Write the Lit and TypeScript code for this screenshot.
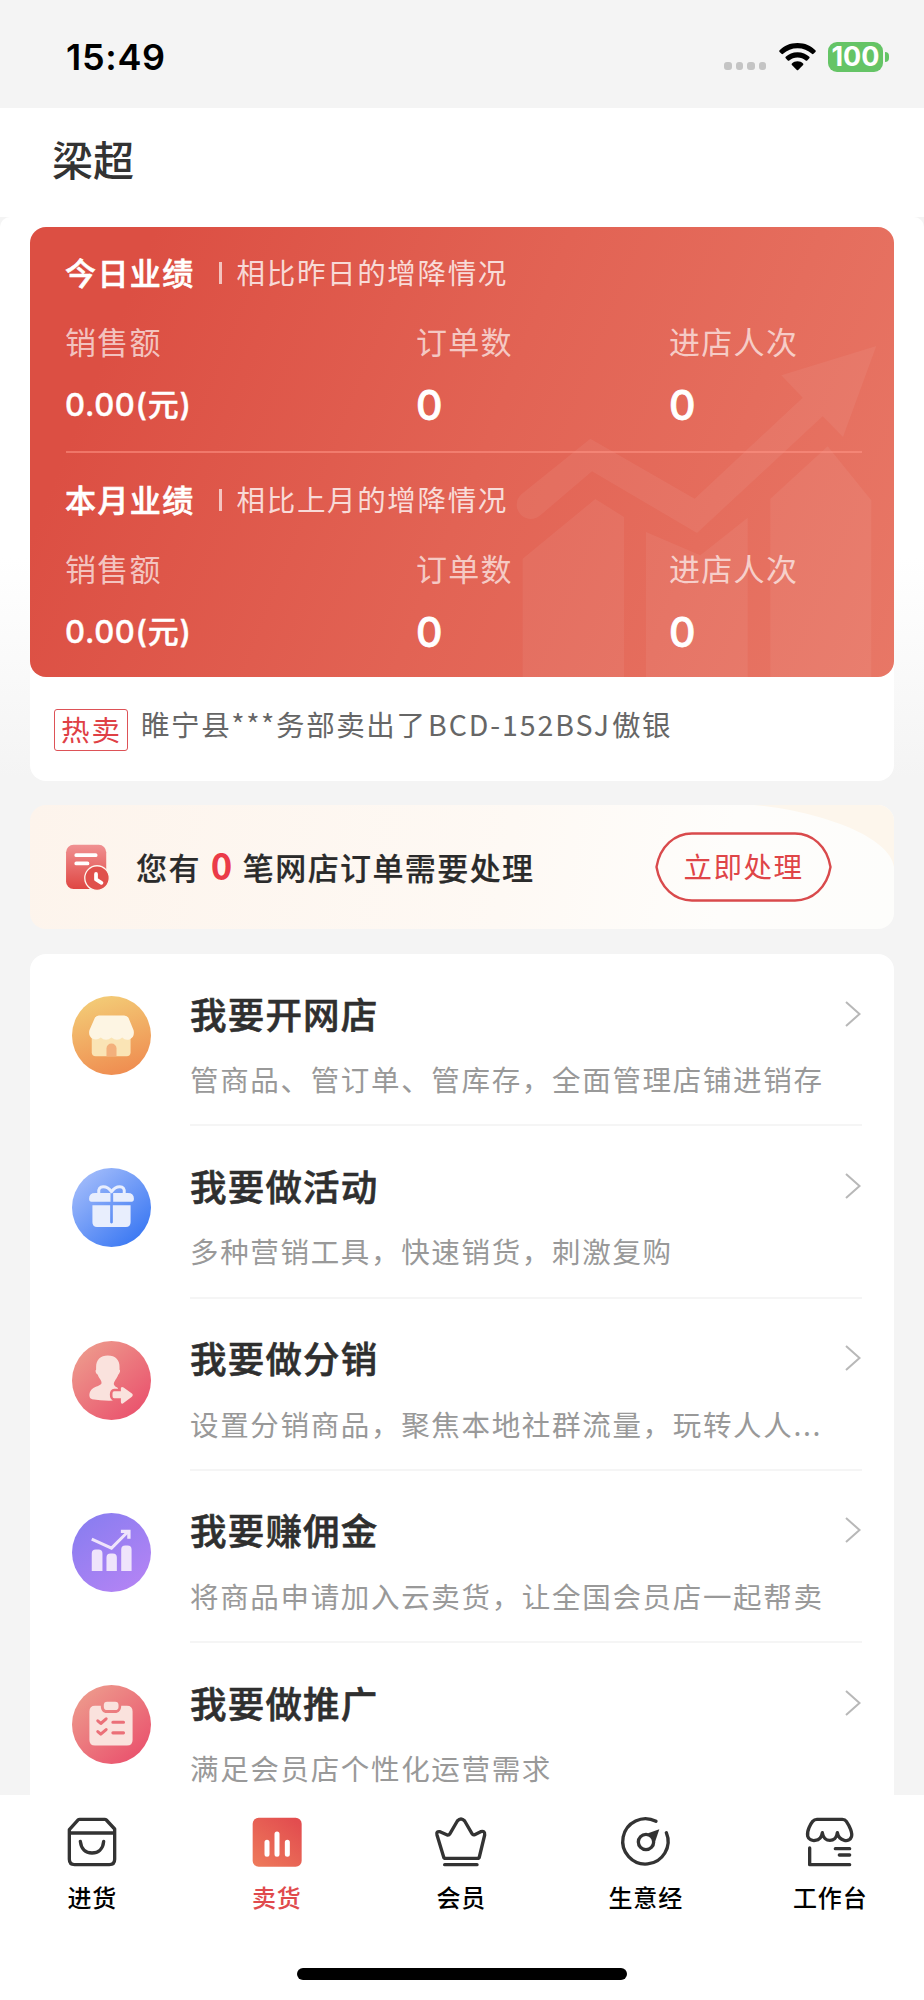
import { LitElement, html, css, svg } from "lit";
import { customElement, property } from "lit/decorators.js";

interface Stat { title: string; hint: string; }
interface MenuItem { icon: string; title: string; desc: string; }
interface Tab { icon: string; label: string; active?: boolean; }

const gradient = (id: string, from: string, to: string, y1 = "15%") => svg`
  <defs><linearGradient id=${id} x1="15%" y1=${y1} x2="80%" y2="90%">
    <stop offset="0" stop-color=${from}></stop><stop offset="1" stop-color=${to}></stop>
  </linearGradient></defs>
  <circle r="118" fill="url(#${id})"></circle>`;

const MENU_ICONS: Record<string, unknown> = {
  shop: svg`
    <defs><linearGradient id="shop" x1="35%" y1="0" x2="65%" y2="100%">
      <stop offset="0" stop-color="#f3cb76"></stop><stop offset="1" stop-color="#ef8c50"></stop>
    </linearGradient></defs>
    <circle r="118" fill="url(#shop)"></circle>
    <path d="M-59 0H57V50Q57 62 45 62H-47Q-59 62 -59 50Z" fill="#fae4b5"></path>
    <path d="M-15 62V39A15 15 0 0 1 15 39V62Z" fill="#f3b07c"></path>
    <path d="M-38 -60H38Q47 -60 51 -52L66 -16Q70 4 55 11Q42 16 32 6Q17 20 0 6Q-17 20 -32 6Q-44 16 -56 10Q-70 2 -66 -16L-50 -52Q-46 -60 -38 -60Z" fill="#fdf5e3"></path>`,
  gift: svg`${gradient("gift", "#9bb7fa", "#3f7bf3")}
    <path d="M0 -47C-12 -66 -42 -70 -38 -43M0 -47C12 -66 42 -70 38 -43" fill="none" stroke="#e8eefd" stroke-width="9" stroke-linecap="round"></path>
    <path d="M-38 -43H-3V-17H-60Q-67 -17 -67 -26Q-67 -43 -49 -43ZM38 -43H5V-17H60Q67 -17 67 -26Q67 -43 49 -43Z" fill="#e8eefd"></path>
    <path d="M-57 -7H-4V45Q0 50 4 45V-7H57V44Q57 58 43 58H-43Q-57 58 -57 44Z" fill="#e8eefd"></path>`,
  share: svg`${gradient("share", "#ed958a", "#ea566f")}
    <path d="M-11 -75C12 -75 25 -61 24 -40V-32C28 -31 24 -20 20 -17C16 -5 7 2 7 11C10 21 20 19 20 25H8Q-5 27 -5 42Q-5 55 4 60Q-30 61 -58 56Q-66 54 -66 46C-66 17 -38 21 -30 9C-28 0 -37 -5 -41 -17C-48 -22 -49 -30 -46 -33V-40C-46 -62 -33 -75 -11 -75Z" fill="#fae2dd"></path>
    <path d="M8 32H28V22Q31 17 36 21L60 38Q67 43 60 49L34 69Q28 71 28 64V53H8Q3 53 3 47V38Q3 32 8 32Z" fill="#fae2dd"></path>`,
  chart: svg`${gradient("chart", "#887df0", "#b183f4", "0%")}
    <path d="M-59 -40L0 -13L49 -62" fill="none" stroke="#efe4fb" stroke-width="9"></path>
    <path d="M28 -68H57V-41H47V-58H28Z" fill="#efe4fb"></path>
    <path d="M-59 55V3Q-59 -9 -47 -9H-39Q-27 -9 -27 3V55ZM-15 55V15Q-15 3 -3 3H4Q16 3 16 15V55ZM29 55V-9Q29 -21 41 -21H48Q60 -21 60 -9V55Z" fill="#efe4fb"></path>`,
  list: svg`${gradient("list", "#ed958a", "#ea566f")}
    <path d="M-32 -56H-49Q-66 -56 -66 -39V46Q-66 63 -49 63H46Q63 63 63 46V-39Q63 -56 46 -56H29C29 -43 22 -34 10 -34H-14C-26 -34 -32 -43 -32 -56Z" fill="#fae2dd"></path>
    <rect x="-23" y="-68" width="44" height="25" rx="10" fill="#fae2dd"></rect>
    <path d="M-41 -11L-32 -3L-16 -17M-41 21L-32 29L-16 15M4 -7H36M4 25H36" fill="none" stroke="#eb7078" stroke-width="9" stroke-linecap="round" stroke-linejoin="round"></path>`,
};

const TAB_ICONS: Record<string, unknown> = {
  stock: svg`<g fill="none" stroke="#333" stroke-width="10" stroke-linecap="round" stroke-linejoin="round">
    <path d="M7 38L34 8Q35 7 38 7H113Q116 7 118 9L143 36V127Q143 143 127 143H23Q7 143 7 127ZM7 48H143"></path>
    <path d="M40 73C43 97 57 108 75 108S108 97 110 73"></path></g>`,
  sell: svg`<defs><linearGradient id="sell" x1="0" y1="1" x2=".8" y2="0">
      <stop offset="0" stop-color="#ee7b5b"></stop><stop offset="1" stop-color="#e24d4f"></stop></linearGradient></defs>
    <rect x="2" y="2" width="147" height="147" rx="18" fill="url(#sell)"></rect>
    <path d="M45 76V112M75 51V112M106 76V112" stroke="#fff" stroke-width="15" stroke-linecap="round"></path>`,
  vip: svg`<g fill="none" stroke="#333" stroke-width="10" stroke-linecap="round" stroke-linejoin="round">
    <path d="M3 54Q0 42 12 44L34 54Q39 55 42 50L64 12Q75 0 86 12L108 50Q111 55 116 53L134 44Q147 40 146 54L130 120Q129 124 124 124H29Q24 124 23 120Z"></path>
    <path d="M26 143H123"></path></g>`,
  compass: svg`<g fill="none" stroke="#333" stroke-width="10" stroke-linecap="round">
    <path d="M105 13A68 68 0 1 0 136 47"></path><circle cx="75" cy="75" r="23"></circle></g>
    <path d="M115 37L81 49L103 72Z" fill="#333"></path>`,
  desk: svg`<g fill="none" stroke="#333" stroke-width="10" stroke-linecap="round" stroke-linejoin="round">
    <path d="M36 7H112Q120 7 124 13C133 26 144 49 139 60C134 77 102 74 97 47C94 78 56 78 52 47C48 76 13 77 8 57C5 42 17 20 23 13Q28 7 36 7Z"></path>
    <path d="M14 93V143H134M91 95H134M103 114H134"></path></g>`,
};

@customElement("menu-row")
class MenuRow extends LitElement {
  @property({ attribute: false }) item!: MenuItem;
  static styles = css`
    :host { display: flex; height: 172.33px; padding: 0 32px 0 41.5px; box-sizing: border-box; }
    .icon { width: 79px; height: 79px; margin-top: 42px; flex: none; }
    .body { flex: 1; min-width: 0; margin-left: 39.5px; border-bottom: 2px solid #f5f5f5; padding-top: 30px; box-sizing: border-box; }
    .head { display: flex; align-items: center; justify-content: space-between; height: 58px; }
    .title { font-size: 36.5px; letter-spacing: 1.2px; font-weight: 500; -webkit-text-stroke: .6px #2f2f2f; color: #2f2f2f; line-height: 58px; margin-top: 1px; }
    .chevron { width: 18px; height: 28px; margin-top: 1px; }
    .desc { margin-top: 16px; margin-right: 38px; font-size: 28.5px; letter-spacing: 1.67px; line-height: 42px; color: #999; white-space: nowrap; }
  `;
  render() {
    return html`
      <svg class="icon" viewBox="-118 -118 236 236">${MENU_ICONS[this.item.icon]}</svg>
      <div class="body">
        <div class="head">
          <div class="title">${this.item.title}</div>
          <svg class="chevron" viewBox="0 0 18 28" fill="none" stroke="#b8b8b8" stroke-width="2"><path d="M2 2L15.5 14L2 26"></path></svg>
        </div>
        <div class="desc">${this.item.desc}</div>
      </div>`;
  }
}

@customElement("app-root")
class AppRoot extends LitElement {
  private stats: Stat[] = [
    { title: "今日业绩", hint: "相比昨日的增降情况" },
    { title: "本月业绩", hint: "相比上月的增降情况" },
  ];
  private menu: MenuItem[] = [
    { icon: "shop", title: "我要开网店", desc: "管商品、管订单、管库存，全面管理店铺进销存" },
    { icon: "gift", title: "我要做活动", desc: "多种营销工具，快速销货，刺激复购" },
    { icon: "share", title: "我要做分销", desc: "设置分销商品，聚焦本地社群流量，玩转人人..." },
    { icon: "chart", title: "我要赚佣金", desc: "将商品申请加入云卖货，让全国会员店一起帮卖" },
    { icon: "list", title: "我要做推广", desc: "满足会员店个性化运营需求" },
  ];
  private tabs: Tab[] = [
    { icon: "stock", label: "进货" },
    { icon: "sell", label: "卖货", active: true },
    { icon: "vip", label: "会员" },
    { icon: "compass", label: "生意经" },
    { icon: "desk", label: "工作台" },
  ];

  static styles = css`
    :host { display: flex; flex-direction: column; width: 924px; height: 2000px; overflow: hidden; background: #f4f4f4; font-family: "Noto Sans CJK SC", sans-serif; }
    .status { height: 108px; flex: none; display: flex; align-items: flex-start; padding: 0 35px 0 66px; box-sizing: border-box; background: #f4f4f4; }
    .time { margin-top: 34px; font: 600 36px/46px Inter, sans-serif; letter-spacing: .7px; color: #000; flex: 1; }
    .dots { display: flex; gap: 4px; margin: 62px 13px 0 0; }
    .dot { width: 7.500px; height: 8px; border-radius: 3px; background: #c4c4c4; }
    .wifi { width: 37px; height: 28px; margin: 43px 12px 0 0; }
    .battery { width: 55px; height: 30px; margin-top: 42px; border-radius: 9px; background: #65c466; color: #fff; font: 700 27px/30px Inter, sans-serif; text-align: center; }
    .nub { width: 4px; height: 10px; margin: 52px 0 0 2px; border-radius: 0 4px 4px 0; background: #65c466; }
    .header { height: 109px; flex: none; background: #fff; padding: 20px 52px; box-sizing: border-box; font-size: 41px; line-height: 60px; font-weight: 500; color: #333; }
    .content { flex: 1; min-height: 0; overflow: hidden; border-radius: 10px 10px 0 0; padding: 10px 30px 0; background: linear-gradient(#fff 0, #fff 340px, #f4f4f4 560px); }
    .summary { background: #fff; border-radius: 16px; height: 554px; }
    .card { position: relative; height: 450px; border-radius: 16px; overflow: hidden; background: linear-gradient(112deg, #dc4f43 12%, #e26354 52%, #e87766 100%); color: #fff; }
    .mark { position: absolute; right: 0; top: 0; width: 432px; height: 450px; fill: #fff; fill-opacity: .06; }
    .stat { position: relative; padding: 23px 32px 0 35px; }
    .stat + .stat { padding-top: 24px; }
    .stat-head { display: flex; align-items: center; height: 44px; line-height: 44px; }
    .stat-title { font-size: 31px; letter-spacing: 1.4px; font-weight: 500; -webkit-text-stroke: .6px #fff; }
    .bar { width: 3px; height: 22px; margin: 2px 15px 0 24px; background: rgba(255,255,255,.65); }
    .hint { font-size: 28.5px; letter-spacing: 1.65px; color: rgba(255,255,255,.78); }
    .grid { display: grid; grid-template-columns: 351px 253px 1fr; }
    .label { margin-top: 27px; font-size: 31px; letter-spacing: 1.3px; line-height: 40px; color: rgba(255,255,255,.68); }
    .value { margin-top: 19px; font: 500 41px/50px Inter, "Noto Sans CJK SC", sans-serif; -webkit-text-stroke: .8px #fff; }
    .money { font-size: 31px; letter-spacing: .7px; -webkit-text-stroke: .4px #fff; }
    .rule { height: 2px; margin: 21px 0 0 1px; background: rgba(255,150,135,.55); }
    .hot { display: flex; align-items: flex-start; padding: 32px 24px 0; }
    .tag { border: 1.5px solid #dd5257; border-radius: 3px; height: 42px; width: 74px; box-sizing: border-box; padding-left: 6px; font-size: 28.5px; letter-spacing: 2px; line-height: 38px; color: #df4045; white-space: nowrap; }
    .news { margin: -6px 0 0 13px; font-size: 28.5px; letter-spacing: 1.6px; line-height: 42px; color: #666; white-space: nowrap; }
    .model { letter-spacing: 1.9px; margin: 0 1px 0 1.5px; }
    .notice { position: relative; display: flex; align-items: center; height: 124px; margin-top: 24px; border-radius: 16px; overflow: hidden; background: linear-gradient(100deg, #fdf4ec, #fef9f4 55%, #fefdfb 80%, #fdfdfb); padding: 0 62px 0 35px; box-sizing: border-box; }
    .corner { position: absolute; right: 0; top: 0; width: 140px; height: 62px; fill: #fdf6ec; }
    .order { width: 45px; height: 47px; margin-right: 26px; }
    .notice-text { flex: 1; font-size: 31px; letter-spacing: 1.4px; font-weight: 500; -webkit-text-stroke: .2px #2b2b2b; color: #2b2b2b; line-height: 44px; white-space: nowrap; }
    .count { font-weight: 700; font-size: 36.5px; line-height: 40px; color: #eb3b48; -webkit-text-stroke: 0; letter-spacing: 0; margin: 0 10.500px 0 10px; }
    .btn { position: relative; width: 177px; height: 70px; text-align: center; font-size: 28.5px; letter-spacing: 1.5px; line-height: 68px; color: #df4548; }
    .btn-shape { position: absolute; inset: 0; width: 177px; height: 70px; fill: none; stroke: #d94a4c; stroke-width: 2.4; }
    .menu { margin-top: 25px; background: #fff; border-radius: 16px 16px 0 0; }
    .tabbar { height: 205px; flex: none; background: #fff; display: flex; flex-direction: column; align-items: center; }
    .tabs { display: flex; width: 100%; height: 173px; padding-right: 1.500px; box-sizing: border-box; }
    .tab { flex: 1; display: flex; flex-direction: column; align-items: center; padding-top: 22px; font-size: 24px; letter-spacing: .8px; line-height: 36px; font-weight: 500; color: #000; }
    .tab-icon { width: 50px; height: 50px; margin-bottom: 12px; overflow: visible; }
    .active { color: #e04a4d; }
    .home { width: 330px; height: 12px; border-radius: 6px; background: #000; }
  `;

  private renderStat(s: Stat, last: boolean) {
    return html`
      <div class="stat">
        <div class="stat-head">
          <span class="stat-title">${s.title}</span><span class="bar"></span><span class="hint">${s.hint}</span>
        </div>
        <div class="grid">
          <div class="label">销售额</div><div class="label">订单数</div><div class="label">进店人次</div>
          <div class="value money">0.00(元)</div><div class="value">0</div><div class="value">0</div>
        </div>
        ${last ? null : html`<div class="rule"></div>`}
      </div>`;
  }

  render() {
    return html`
      <div class="status">
        <div class="time">15:49</div>
        <div class="dots">${[0, 1, 2, 3].map(() => html`<span class="dot"></span>`)}</div>
        <svg class="wifi" viewBox="0 0 37 28">
          <path d="M18.5 0C26 0 32 2.8 36.4 7.2Q37.2 8 36.4 8.9L34.5 10.8Q33.7 11.5 32.9 10.8C29 7.200 24 5.200 18.500 5.200S8 7.200 4.100 10.800Q3.300 11.500 2.500 10.800L.6 8.900Q-.2 8 .6 7.200C5 2.800 11 0 18.500 0Z"></path>
          <path d="M18.500 9.200C23.300 9.200 27.400 11 30.300 13.700Q31 14.500 30.300 15.300L28.200 17.400Q27.500 18 26.700 17.400C24.500 15.500 21.700 14.400 18.500 14.400S12.500 15.500 10.300 17.400Q9.500 18 8.800 17.400L6.700 15.300Q6 14.500 6.700 13.700C9.600 11 13.700 9.200 18.500 9.200Z"></path>
          <path d="M18.500 18.300C20.700 18.300 22.600 19.100 24.100 20.400Q24.800 21.100 24.100 21.900L19.200 27Q18.500 27.700 17.800 27L12.900 21.900Q12.200 21.100 12.900 20.400C14.400 19.100 16.300 18.300 18.500 18.300Z"></path>
        </svg>
        <div class="battery">100</div><div class="nub"></div>
      </div>
      <div class="header">梁超</div>
      <div class="content">
        <div class="summary">
          <div class="card">
            <svg class="mark" viewBox="0 50 1296 1350">
              <path d="M178 852L385 685L698 865L1022 562L958 495L1243 407L1143 680L1082 618L705 968L390 783L235 915A42 42 0 0 1 178 852Z"></path>
              <path d="M182 1045L400 866L486 920V1400H182ZM552 965L715 1035L857 922V1400H552ZM925 865L1097 708L1228 870V1400H925Z"></path>
            </svg>
            ${this.stats.map((s, i) => this.renderStat(s, i === 1))}
          </div>
          <div class="hot"><div class="tag">热卖</div><div class="news">睢宁县***务部卖出了<span class="model">BCD-152BSJ</span>傲银</div></div>
        </div>
        <div class="notice">
          <svg class="corner" viewBox="0 0 140 62"><path d="M0 0C60 5 136 30 140 62V0Z"></path></svg>
          <svg class="order" viewBox="198 162 132 138">
            <defs><linearGradient id="ord" x1="0" y1="0" x2="0" y2="1"><stop offset="0" stop-color="#f09192"></stop><stop offset="1" stop-color="#df4743"></stop></linearGradient></defs>
            <rect x="201" y="164" width="118" height="130" rx="22" fill="url(#ord)"></rect>
            <path d="M231 195H288M231 219H264" stroke="#fff" stroke-width="11" stroke-linecap="round"></path>
            <circle cx="292" cy="262" r="36" fill="#e0504c" stroke="#fdf4ec" stroke-width="4"></circle>
            <path d="M289 250V266L305 276" fill="none" stroke="#fff" stroke-width="11" stroke-linecap="round" stroke-linejoin="round"></path>
          </svg>
          <div class="notice-text">您有<span class="count">0</span>笔网店订单需要处理</div>
          <div class="btn">
            <svg class="btn-shape" viewBox="0 0 177 70"><path d="M37 1.500H140C157 1.500 172 14 175.500 35C172 56 157 68.500 140 68.500H37C20 68.500 5 56 1.500 35C5 14 20 1.500 37 1.500Z" stroke-linejoin="round"></path></svg>立即处理
          </div>
        </div>
        <div class="menu">${this.menu.map((m) => html`<menu-row .item=${m}></menu-row>`)}</div>
      </div>
      <div class="tabbar">
        <div class="tabs">
          ${this.tabs.map((t) => html`<div class="tab ${t.active ? "active" : ""}">
            <svg class="tab-icon" viewBox="0 0 150 150">${TAB_ICONS[t.icon]}</svg>${t.label}</div>`)}
        </div>
        <div class="home"></div>
      </div>`;
  }
}
